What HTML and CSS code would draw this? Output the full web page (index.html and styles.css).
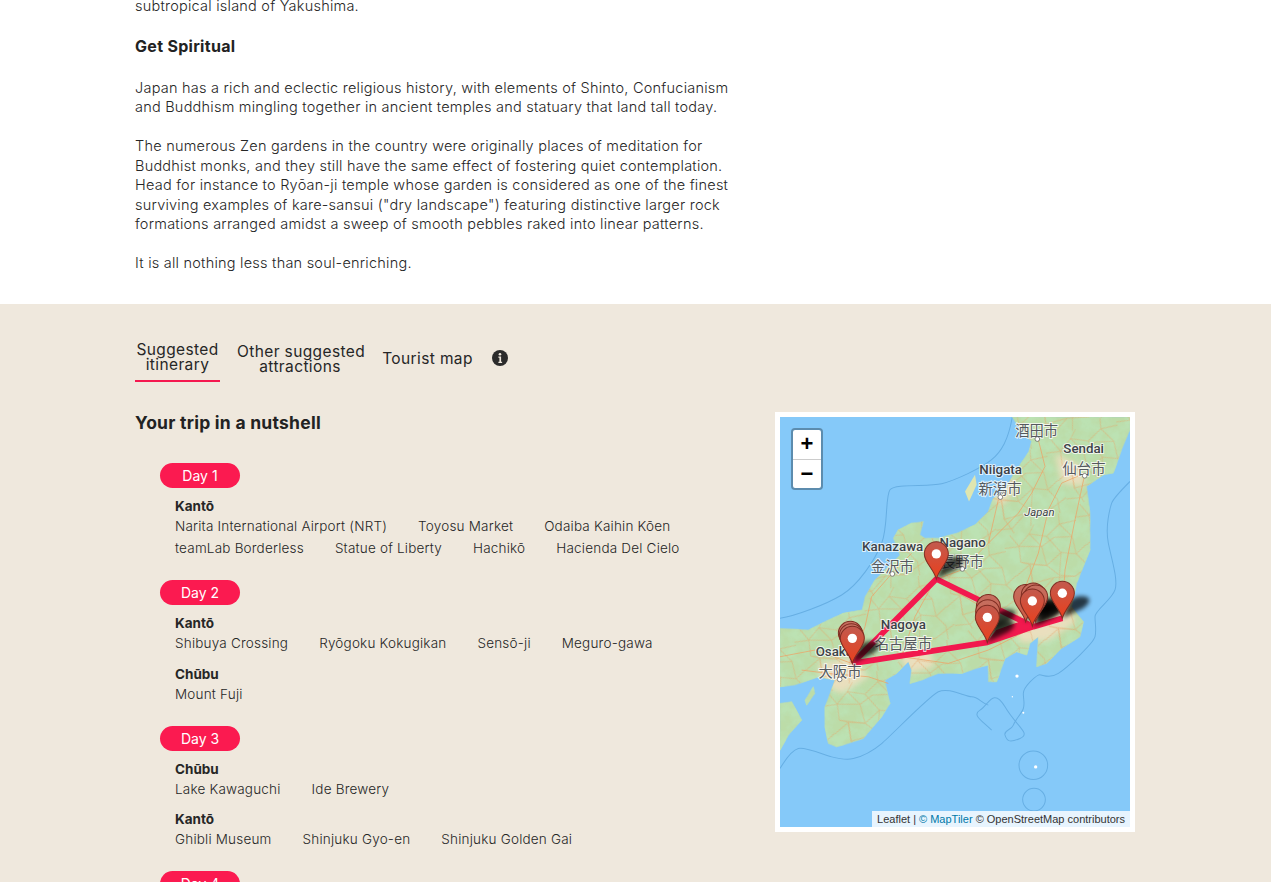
FILE: index.html
```html
<!DOCTYPE html>
<html lang="en">
<head>
<meta charset="utf-8">
<title>Japan itinerary</title>
<link rel="stylesheet" href="styles.css">
</head>
<body>
<main class="page">
  <article class="article">
    <p>subtropical island of Yakushima.</p>
    <h2>Get Spiritual</h2>
    <p>Japan has a rich and eclectic religious history, with elements of Shinto, Confucianism<br>and Buddhism mingling together in ancient temples and statuary that land tall today.</p>
    <p>The numerous Zen gardens in the country were originally places of meditation for<br>Buddhist monks, and they still have the same effect of fostering quiet contemplation.<br>Head for instance to Ryōan-ji temple whose garden is considered as one of the finest<br>surviving examples of kare-sansui ("dry landscape") featuring distinctive larger rock<br>formations arranged amidst a sweep of smooth pebbles raked into linear patterns.</p>
    <p>It is all nothing less than soul-enriching.</p>
  </article>
  <section class="trip">
    <nav class="tabs">
      <a class="tab tab-active">Suggested<br>itinerary</a>
      <a class="tab tab-second">Other suggested<br>attractions</a>
      <a class="tab tab-third">Tourist map</a>
      <svg class="info" viewBox="0 0 16 16" width="16" height="16"><circle cx="8" cy="8" r="8" fill="#2b2b2b"/><circle cx="8" cy="4.3" r="1.3" fill="#efe8dd"/><path d="M6.4 6.6h2.7v5.2h1v1.2H6.4v-1.2h1v-4h-1z" fill="#efe8dd"/></svg>
    </nav>
    <div class="columns">
      <div class="summary">
        <h3>Your trip in a nutshell</h3>
        <div class="day">
          <div class="pill">Day 1</div>
          <div class="region">
            <h4>Kantō</h4>
            <ul>
              <li>Narita International Airport (NRT)</li><li>Toyosu Market</li><li>Odaiba Kaihin Kōen</li><li>teamLab Borderless</li><li>Statue of Liberty</li><li>Hachikō</li><li>Hacienda Del Cielo</li>
            </ul>
          </div>
        </div>
        <div class="day">
          <div class="pill">Day 2</div>
          <div class="region">
            <h4>Kantō</h4>
            <ul><li>Shibuya Crossing</li><li>Ryōgoku Kokugikan</li><li>Sensō-ji</li><li>Meguro-gawa</li></ul>
          </div>
          <div class="region">
            <h4>Chūbu</h4>
            <ul><li>Mount Fuji</li></ul>
          </div>
        </div>
        <div class="day">
          <div class="pill">Day 3</div>
          <div class="region">
            <h4>Chūbu</h4>
            <ul><li>Lake Kawaguchi</li><li>Ide Brewery</li></ul>
          </div>
          <div class="region">
            <h4>Kantō</h4>
            <ul><li>Ghibli Museum</li><li>Shinjuku Gyo-en</li><li>Shinjuku Golden Gai</li></ul>
          </div>
        </div>
        <div class="day">
          <div class="pill">Day 4</div>
        </div>
      </div>
      <aside class="map">
        <svg class="map-art" viewBox="15 22 1050 1228" preserveAspectRatio="none">
          <defs>
            <linearGradient id="pinFront" x1="0" y1="0" x2="0" y2="1"><stop offset="0" stop-color="#c25a4e"/><stop offset="1" stop-color="#ea3f1c"/></linearGradient>
            <linearGradient id="pinBack" x1="0" y1="0" x2="0" y2="1"><stop offset="0" stop-color="#c56f60"/><stop offset="1" stop-color="#cf5a42"/></linearGradient>
            <filter id="soft" x="-60%" y="-60%" width="220%" height="220%"><feGaussianBlur stdDeviation="7"/></filter>
            <filter id="blur" x="-20%" y="-20%" width="140%" height="140%"><feGaussianBlur stdDeviation="9"/></filter>
            <filter id="mottle" x="0" y="0" width="100%" height="100%">
              <feTurbulence type="fractalNoise" baseFrequency=".024" numOctaves="4" seed="7"/>
              <feColorMatrix values="0 0 0 0 .5  0 0 0 0 .76  0 0 0 0 .45  3 0 0 0 -1.1"/>
              <feComposite in2="SourceGraphic" operator="in" result="n"/>
              <feMerge><feMergeNode in="SourceGraphic"/><feMergeNode in="n"/></feMerge>
            </filter>
            <pattern id="roadMesh" width="230" height="210" patternUnits="userSpaceOnUse" patternTransform="rotate(-24)">
              <path d="M0 30L40 42 85 20 130 48 180 30 230 40M0 120L50 105 95 128 150 110 190 132 230 118M0 180L45 195 100 170 160 192 230 176M30 0L42 42 28 88 50 105 35 160 45 210M110 0L85 20 104 70 95 128 118 170 100 210M190 0L180 30 200 80 190 132 205 170 195 210M42 42L104 70 150 60 200 80M28 88L95 128M150 110L118 170 160 192M130 48L150 110M50 105L35 160 100 170"/>
            </pattern>
            <clipPath id="landClip"><path d="M712 22L735 60 770 95 762 125 745 150 715 195 690 240 655 265 640 305 600 345 545 370 490 385 450 385 435 375 445 335 410 340 370 360 355 385 365 410 375 435 340 470 300 510 270 560 262 600 205 610 160 630 100 660 15 655 15 830 60 825 130 800 180 810 165 850 150 890 150 950 160 1000 185 1010 220 1000 265 985 320 920 345 880 335 840 330 810 365 790 400 755 410 780 405 820 440 810 490 790 560 790 620 770 640 765 640 815 665 815 690 745 725 725 755 735 765 700 790 680 785 770 815 760 860 715 915 680 925 635 890 590 905 520 945 420 945 310 935 230 985 195 1015 190 1040 120 1065 60 1065 22Z"/></clipPath>
            <g id="pin"><path class="pin-body" d="M0 0C-8-30-36-50-36-75A36 36 0 0 1 36-75C36-50 8-30 0 0Z" fill="url(#pinFront)"/><circle cx="0" cy="-75" r="14" fill="#fff"/></g>
            <path id="pinOld" class="pin-body" d="M0 0C-8-30-36-50-36-75A36 36 0 0 1 36-75C36-50 8-30 0 0Z" fill="url(#pinBack)"/>
            <path id="shade" d="M0 0L20-50Q40-72 74-64 92-52 62-30Z" fill="#000" opacity=".72" filter="url(#soft)"/>
          </defs>
          <rect x="15" y="22" width="1050" height="1228" fill="#85c9f9"/>
          <g class="edge">
            <path d="M15 625C60 618 150 585 200 555S300 450 320 400 330 260 345 240 460 232 500 222 620 175 650 150 700 90 712 22"/>
            <path d="M1065 215C1040 240 1015 265 1010 280S990 350 1000 400 1030 510 1020 540 960 600 960 620 965 660 960 680 880 770 850 790 800 790 790 795 745 830 745 850 750 880 745 895 720 930 715 945 685 960 690 975 700 1000 735 985 725 950 690 890 640 885 615 900 620 930 650 960 680 945"/>
            <path d="M15 1075C30 1050 50 1020 70 1015S150 1035 170 1040 215 1050 235 1045 290 1025 320 1000 460 860 490 845 570 860 590 860 620 880 640 885"/>
            <circle cx="775" cy="1065" r="43"/>
            <circle cx="777" cy="1168" r="34"/>
          </g>
          <g filter="url(#mottle)">
            <path class="land" d="M712 22L735 60 770 95 762 125 745 150 715 195 690 240 655 265 640 305 600 345 545 370 490 385 450 385 435 375 445 335 410 340 370 360 355 385 365 410 375 435 340 470 300 510 270 560 262 600 205 610 160 630 100 660 15 655 15 830 60 825 130 800 180 810 165 850 150 890 150 950 160 1000 185 1010 220 1000 265 985 320 920 345 880 335 840 330 810 365 790 400 755 410 780 405 820 440 810 490 790 560 790 620 770 640 765 640 815 665 815 690 745 725 725 755 735 765 700 790 680 785 770 815 760 860 715 915 680 925 635 890 590 905 520 945 420 945 310 935 230 985 195 1015 190 1040 120 1065 60 1065 22Z"/>
            <path class="land" d="M15 880L50 875 80 930 40 975 15 1020Z"/>
            <path class="land" d="M90 870L115 830 120 850 95 885Z"/>
          </g>
          <path class="land-pale" d="M570 245L600 195 605 225 582 275Z"/>
          <g clip-path="url(#landClip)">
            <g class="plain" filter="url(#blur)">
              <path d="M700 630L790 570 890 580 900 640 820 690 740 700Z"/>
              <path d="M130 760L230 740 280 800 200 850 140 820Z"/>
              <path d="M370 730L460 710 480 770 400 790Z"/>
              <path d="M650 260L710 200 720 240 680 290Z"/>
              <path d="M840 130L920 170 930 230 860 220Z"/>
            </g>
            <rect class="mesh" x="15" y="22" width="1050" height="1228" fill="url(#roadMesh)"/>
          </g>
          <g class="roads">
            <path d="M15 740L120 720 230 760 380 740 520 760 640 720 760 660 860 630"/>
            <path d="M230 760L270 650 290 560 360 480 410 430"/>
            <path d="M380 740L420 620 480 510 560 480 640 400 670 270"/>
            <path d="M760 660L740 560 790 430 820 300 860 220 930 190"/>
            <path d="M930 190L900 330 870 480 860 630"/>
            <path d="M480 510L620 590 740 620"/>
            <path d="M80 780L160 790 280 800 340 820"/>
            <path d="M790 90L810 170 770 250 730 310 640 400"/>
          </g>
          <g class="route">
            <path d="M232 760L484 507 745 635 775 650"/>
            <path d="M232 760L637 697 775 650 862 625"/>
            <path class="route-wedge" d="M637 697L665 662 745 633 782 650Z"/>
          </g>
          <g class="labels">
            <text class="cjk" x="785" y="80">酒田市</text>
            <text x="926" y="130">Sendai</text>
            <text class="cjk" x="927" y="194">仙台市</text>
            <text x="677" y="192">Niigata</text>
            <text class="cjk" x="675" y="252">新潟市</text>
            <text class="italic" x="793" y="320">Japan</text>
            <text x="353" y="424">Kanazawa</text>
            <text class="cjk" x="352" y="486">金沢市</text>
            <text x="563" y="410">Nagano</text>
            <text class="cjk" x="562" y="470">長野市</text>
            <text x="385" y="657">Nagoya</text>
            <text class="cjk" x="385" y="717">名古屋市</text>
            <text x="178" y="737">Osaka</text>
            <text class="cjk" x="195" y="801">大阪市</text>
          </g>
          <g class="dots">
            <circle cx="787" cy="88" r="7"/><circle cx="929" cy="198" r="7"/><circle cx="676" cy="262" r="7"/><circle cx="352" cy="492" r="7"/><circle cx="562" cy="477" r="7"/><circle cx="194" cy="808" r="7"/>
          </g>
          <g class="specks">
            <circle cx="726" cy="798" r="5"/><circle cx="712" cy="860" r="2"/><circle cx="745" cy="908" r="3"/><circle cx="782" cy="1070" r="5"/>
          </g>
          <use href="#shade" x="484" y="507"/>
          <use href="#shade" x="232" y="760"/>
          <use href="#shade" x="637" y="697"/>
          <use href="#shade" x="640" y="665"/>
          <use href="#shade" x="775" y="650"/>
          <use href="#shade" x="775" y="630"/>
          <use href="#shade" x="750" y="635"/>
          <use href="#shade" x="790" y="640"/>
          <use href="#shade" x="862" y="625"/>
          <use href="#pin" x="484" y="507"/>
          <use href="#pinOld" x="226" y="745"/>
          <use href="#pinOld" x="229" y="752"/>
          <use href="#pin" x="232" y="760"/>
          <use href="#pinOld" x="640" y="665"/>
          <use href="#pinOld" x="638" y="680"/>
          <use href="#pin" x="637" y="697"/>
          <use href="#pinOld" x="752" y="635"/>
          <use href="#pinOld" x="775" y="630"/>
          <use href="#pinOld" x="782" y="636"/>
          <use href="#pin" x="772" y="648"/>
          <use href="#pin" x="862" y="625"/>
        </svg>
        <div class="zoom">
          <span class="zoom-btn">+</span>
          <span class="zoom-btn">−</span>
        </div>
        <div class="attribution">Leaflet | <a>© MapTiler</a> © OpenStreetMap contributors</div>
      </aside>
    </div>
  </section>
</main>
</body>
</html>
```
FILE: styles.css
```css
* { box-sizing: border-box; }
html, body { margin: 0; height: 100%; overflow: hidden; }
body { font-family: Inter, "Noto Sans", sans-serif; color: #262626; background: #fff; }
.page { height: 882px; overflow: hidden; }

.article { height: 308px; margin-top: -4px; padding: 0 0 0 135px; font-size: 14.5px; line-height: 19.5px; font-weight: 300; letter-spacing: .23px; }
.article p { margin: 0 0 19.5px; white-space: nowrap; }
.article h2 { margin: 0 0 20.5px; font-size: 16px; line-height: 22px; font-weight: 700; letter-spacing: .3px; color: #222; }

.trip { background: #efe8dd; padding: 38px 0 0 135px; height: 578px; }
.tabs { display: flex; align-items: center; height: 40px; font-size: 15.5px; line-height: 15px; font-weight: 400; letter-spacing: .38px; }
.tab { display: block; text-align: center; white-space: nowrap; }
.tab-active { width: 85px; height: 40px; border-bottom: 2px solid #f5184f; }
.tab-second { width: 126px; margin: 0 0 7px 17px; }
.tab-third { width: 91px; margin: 0 0 8px 19px; }
.info { margin: 0 0 8px 19px; }

.columns { display: grid; grid-template-columns: 640px 360px; margin-top: 30px; }
.summary h3 { margin: 0 0 29px; font-size: 17.5px; line-height: 22px; font-weight: 700; letter-spacing: .25px; color: #222; }
.day { margin: 0 0 21.25px 25px; }
.pill { width: 80px; height: 25px; border-radius: 13px; background: #fb1a50; color: #fff; font-size: 14px; line-height: 25px; text-align: center; }
.region { margin: 9px 0 10.25px 15px; }
.region:last-child { margin-bottom: 0; }
.region h4 { margin: 0; font-size: 13.5px; line-height: 18px; font-weight: 700; }
.region ul { display: flex; flex-wrap: wrap; column-gap: 31px; margin: 0; padding: 0; list-style: none; font-size: 13.5px; line-height: 22px; font-weight: 300; letter-spacing: .2px; }

.map { position: relative; width: 360px; height: 420px; border: 5px solid #fff; background: #85c9f9; overflow: hidden; }
.map-art { display: block; width: 350px; height: 410px; }
.edge { fill: none; stroke: #5fa8de; stroke-width: 3; opacity: .8; }
.land { fill: #bcdca8; stroke: #a9d3c6; stroke-width: 2; }
.land-pale { fill: #dfe6b0; }
.plain { fill: #efdfc0; opacity: .9; }
.mesh { opacity: .58; }
#roadMesh path { fill: none; stroke: #ec9d5e; stroke-width: 2; }
.roads { fill: none; stroke: #eda468; stroke-width: 2.5; opacity: .9; }
.route { fill: none; stroke: #f2194e; stroke-width: 17; stroke-linejoin: round; }
.route-wedge { fill: #f2194e; stroke-width: 4; }
.labels text { font-family: Roboto, "Liberation Sans", sans-serif; font-size: 40px; font-weight: 500; text-anchor: middle; fill: #3d4248; stroke: #fff; stroke-opacity: .75; stroke-width: 6px; paint-order: stroke; }
.labels .cjk { font-family: "Noto Sans CJK JP", sans-serif; font-size: 43px; font-weight: 400; fill: #55595e; }
.labels .italic { font-size: 34px; font-style: italic; font-weight: 400; }
.dots circle { fill: #fff; stroke: #555; stroke-width: 2; }
.specks { fill: #fff; }
.pin-body { stroke: #7f2d22; stroke-width: 3; }

.zoom { position: absolute; top: 11px; left: 11px; width: 32px; height: 62px; border: 2px solid rgba(0,0,0,.3); border-radius: 4px; background: #fff; background-clip: padding-box; display: flex; flex-direction: column; }
.zoom-btn { flex: 1; display: flex; align-items: center; justify-content: center; font-family: "Liberation Sans", sans-serif; font-size: 22px; font-weight: 700; color: #000; }
.zoom-btn:first-child { border-bottom: 1px solid #ccc; }
.attribution { position: absolute; right: 0; bottom: 0; height: 16px; padding: 0 5px; background: rgba(255,255,255,.8); font-family: "Liberation Sans", sans-serif; font-size: 11px; line-height: 16px; color: #333; white-space: nowrap; }
.attribution a { color: #0078a8; }
```
